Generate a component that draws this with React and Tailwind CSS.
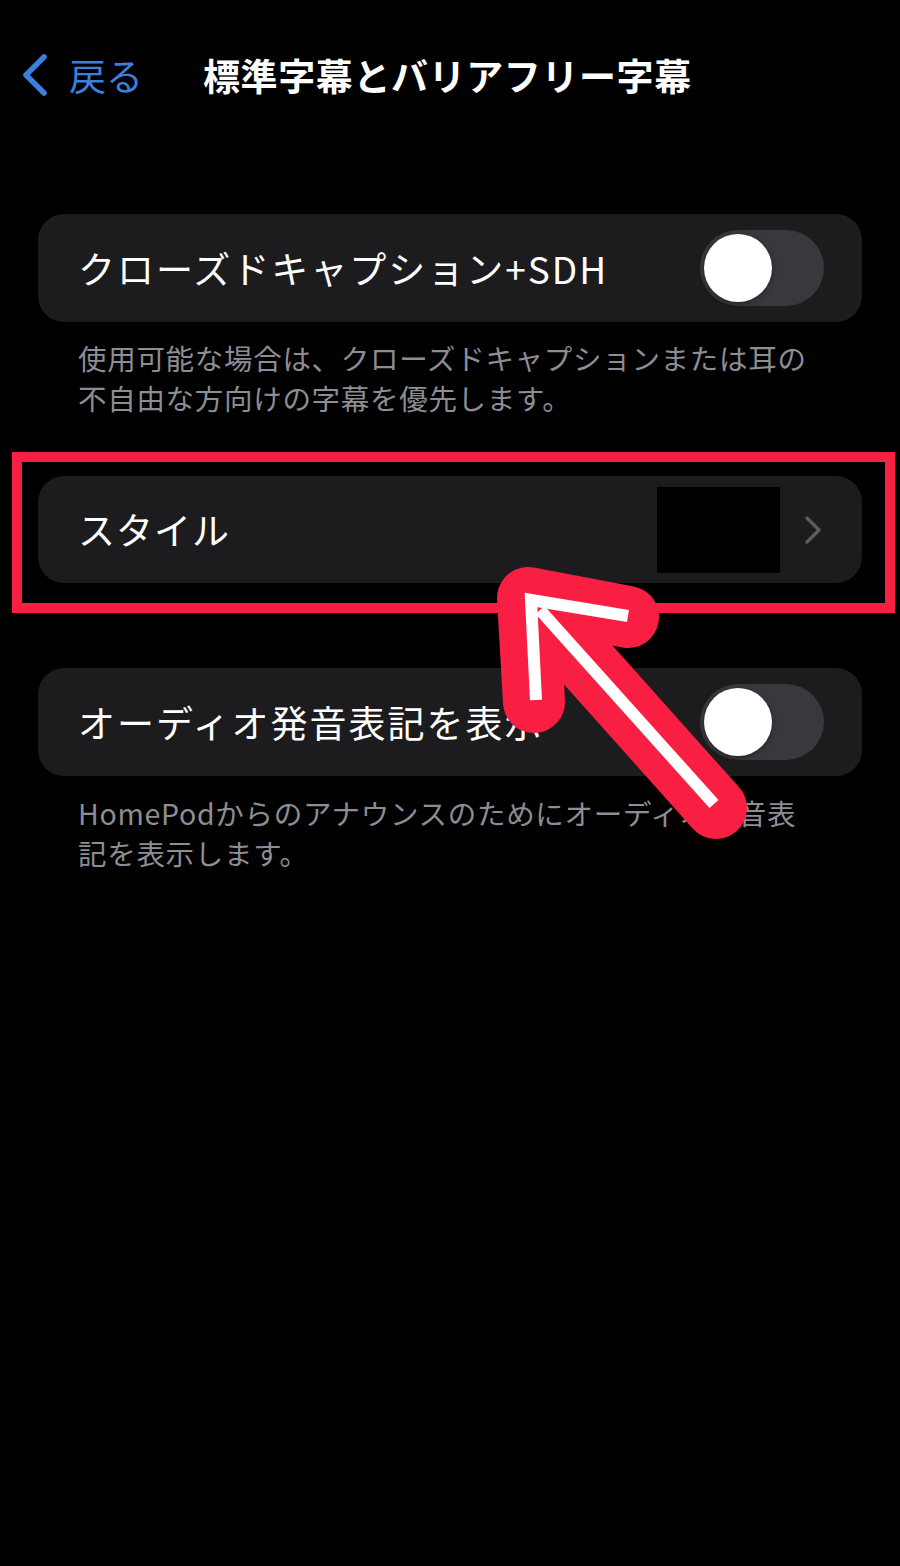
import React from "react"

const jp = { fontFamily: '"Noto Sans CJK JP", "Noto Sans", sans-serif' }

const Toggle = () => (
  <div className="w-[124px] h-[76px] rounded-full bg-[#39393d] p-[4px] flex items-center shrink-0">
    <div className="w-[68px] h-[68px] rounded-full bg-white shadow-[0_2px_6px_rgba(0,0,0,0.35)]" />
  </div>
)

const Card = ({ children }) => (
  <div className="mx-[38px] h-[108px] rounded-[26px] bg-[#1c1c1e] pl-[40px] pr-[38px] flex items-center justify-between">
    {children}
  </div>
)

export default function App() {
  return (
    <div className="relative w-[900px] min-h-[1566px] bg-black overflow-hidden" style={jp}>
      {/* Nav bar */}
      <div className="h-[100px] pt-[50px] flex items-center">
        <div className="w-[203px] pl-[20px] flex items-center text-[#3a80dc]">
          <svg width="30" height="44" viewBox="0 0 30 44" fill="none">
            <path d="M24 4 L6 22 L24 40" stroke="currentColor" strokeWidth="5.5" strokeLinecap="round" strokeLinejoin="round" />
          </svg>
          <span className="ml-[19px] text-[37px] leading-none">戻る</span>
        </div>
        <h1 className="text-white text-[37px] font-bold leading-none tracking-[0.6px]">標準字幕とバリアフリー字幕</h1>
      </div>

      {/* Section 1 */}
      <div className="mt-[114px]">
        <Card>
          <span className="text-white text-[37px] leading-none tracking-[2px]">クローズドキャプション+SDH</span>
          <Toggle />
        </Card>
        <p className="px-[78px] pt-[16px] text-[#8d8d93] text-[28.5px] leading-[40px] tracking-[0.7px]">
          使用可能な場合は、クローズドキャプションまたは耳の<br />不自由な方向けの字幕を優先します。
        </p>
      </div>

      {/* Section 2 */}
      <div className="mt-[58px]">
        <div className="mx-[38px] h-[107px] rounded-[26px] bg-[#1c1c1e] pl-[40px] pr-[40px] flex items-center justify-between">
          <span className="text-white text-[37px] leading-none tracking-[1px]">スタイル</span>
          <div className="flex items-center gap-[24px]">
            <div className="w-[123px] h-[86px] bg-black" />
            <svg width="18" height="30" viewBox="0 0 18 30" fill="none">
              <path d="M3 3 L15 15 L3 27" stroke="#5b5b60" strokeWidth="3.5" strokeLinecap="round" strokeLinejoin="round" />
            </svg>
          </div>
        </div>
      </div>

      {/* Section 3 */}
      <div className="mt-[85px]">
        <Card>
          <span className="text-white text-[37px] leading-none tracking-[2px]">オーディオ発音表記を表示</span>
          <Toggle />
        </Card>
        <p className="px-[78px] pt-[17px] text-[#8d8d93] text-[28.5px] leading-[40px] tracking-[0.7px]">
          HomePodからのアナウンスのためにオーディオ発音表<br />記を表示します。
        </p>
      </div>

      {/* Annotation: red frame */}
      <div className="absolute left-[12px] top-[452px] w-[883px] h-[161px] border-[10px] border-[#f81f42] pointer-events-none" />

      {/* Annotation: arrow */}
      <svg className="absolute left-0 top-0 pointer-events-none" width="900" height="1566" viewBox="0 0 900 1566">
        <g stroke="#f81f42" strokeWidth="62" strokeLinecap="round" strokeLinejoin="round" fill="none">
          <path d="M716 808 L532 602" />
          <path d="M534 702 L528 598 L628 617" />
        </g>
        <g stroke="#ffffff" strokeWidth="12" strokeLinecap="butt" strokeLinejoin="miter" fill="none">
          <path d="M714 804 L540 610" />
          <path d="M536 700 L531 600 L628 616" />
        </g>
      </svg>
    </div>
  )
}
